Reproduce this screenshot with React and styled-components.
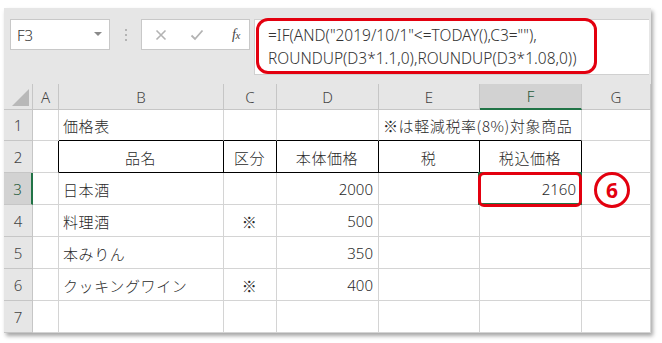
import React from "react";
import styled, { createGlobalStyle } from "styled-components";

const Global = createGlobalStyle`
  html, body { margin: 0; padding: 0; background: #fff; }
  body { font-family: "Noto Sans CJK JP", "Noto Sans", sans-serif; }
  * { box-sizing: border-box; }
`;

const Page = styled.div`
  width: 662px;
  height: 343px;
  padding: 8px 0 0 4px;
  background: #fff;
`;

const Frame = styled.div`
  width: 647px;
  background: #fff;
  box-shadow: 2px 3px 4px rgba(0, 0, 0, 0.35);
`;

const FormulaArea = styled.div`
  background: #e6e6e6;
  height: 76px;
  padding: 11px 0 0 6px;
  display: flex;
  align-items: flex-start;
`;

const NameBox = styled.div`
  width: 100px;
  height: 31px;
  background: #fff;
  border: 1px solid #c8c8c8;
  display: flex;
  align-items: center;
  justify-content: space-between;
  padding: 0 7px 0 6px;
  font-family: "Noto Sans", "Liberation Sans", sans-serif;
  font-weight: 300;
  font-size: 15px;
  color: #333;
`;

const Caret = styled.span`
  width: 0;
  height: 0;
  border-left: 4px solid transparent;
  border-right: 4px solid transparent;
  border-top: 4px solid #8a8a8a;
  margin-top: -2px;
`;

const Separator = styled.div`
  width: 31px;
  height: 31px;
  display: flex;
  flex-direction: column;
  align-items: center;
  justify-content: center;
  gap: 3px;
  & > span {
    width: 2px;
    height: 2px;
    background: #b4b4b4;
  }
`;

const ButtonBox = styled.div`
  width: 109px;
  height: 31px;
  background: #fff;
  border: 1px solid #c8c8c8;
  display: flex;
  align-items: center;
  padding-left: 13px;
`;

const IconSlot = styled.span`
  width: ${(p) => p.$w}px;
  display: flex;
  align-items: center;
  justify-content: center;
`;

const Fx = styled.span`
  font-family: "Liberation Serif", serif;
  font-style: italic;
  font-size: 14px;
  color: #444;
  letter-spacing: -0.5px;
  & small { font-size: 11px; }
`;

const FormulaBox = styled.div`
  position: relative;
  margin-left: 4px;
  width: 395px;
  height: 56px;
  background: #fff;
  border: 1px solid #d0d0d0;
  border-right: none;
  padding: 4px 0 0 13px;
  font-family: "Noto Sans", "Liberation Sans", sans-serif;
  font-weight: 300;
  font-size: 15.5px;
  line-height: 23px;
  color: #333;
  white-space: pre;
`;

const RedFrame = styled.div`
  position: absolute;
  border: 3px solid #e3000f;
  border-radius: ${(p) => p.$r}px;
  pointer-events: none;
`;

const Sheet = styled.div`
  position: relative;
  display: grid;
  grid-template-columns: 29px 26px 165px 53px 102px 101px 102px 69px;
  grid-template-rows: 26px 31px repeat(6, 32px);
  font-size: 15px;
  color: #222;
`;

const ColHead = styled.div`
  background: ${(p) => (p.$sel ? "#d2d2d2" : "#e6e6e6")};
  border-right: 1px solid #c6c6c6;
  border-bottom: ${(p) => (p.$sel ? "2px solid #217346" : "1px solid #c6c6c6")};
  color: ${(p) => (p.$sel ? "#1f5a3a" : "#444")};
  display: flex;
  align-items: center;
  justify-content: center;
  font-family: "Noto Sans", "Liberation Sans", sans-serif;
  font-weight: 300;
  font-size: 15px;
`;

const Corner = styled.div`
  background: #e6e6e6;
  border-right: 1px solid #c6c6c6;
  border-bottom: 1px solid #c6c6c6;
  position: relative;
  &::after {
    content: "";
    position: absolute;
    right: 3px;
    bottom: 3px;
    width: 0;
    height: 0;
    border-left: 17px solid transparent;
    border-bottom: 17px solid #b8b8b8;
  }
`;

const RowHead = styled.div`
  background: ${(p) => (p.$sel ? "#d2d2d2" : "#e6e6e6")};
  border-bottom: 1px solid #c6c6c6;
  border-right: ${(p) => (p.$sel ? "2px solid #217346" : "1px solid #c6c6c6")};
  color: ${(p) => (p.$sel ? "#1f5a3a" : "#444")};
  display: flex;
  align-items: center;
  justify-content: center;
  font-family: "Noto Sans", "Liberation Sans", sans-serif;
  font-weight: 300;
  font-size: 15px;
`;

const Cell = styled.div`
  position: relative;
  grid-column: ${(p) => (p.$span ? `span ${p.$span}` : "auto")};
  border-right: 1px solid ${(p) => (p.$rb ? "#000" : "#d4d4d4")};
  border-bottom: 1px solid ${(p) => (p.$bb ? "#000" : "#d4d4d4")};
  display: flex;
  align-items: center;
  padding: 1px 5px 0 4px;
  justify-content: ${(p) =>
    p.$align === "right" ? "flex-end" : p.$align === "center" ? "center" : "flex-start"};
  font-family: ${(p) =>
    p.$num ? `"Noto Sans", "Liberation Sans", sans-serif` : `"Noto Sans CJK JP", sans-serif`};
  font-weight: 300;
  letter-spacing: ${(p) => (p.$num ? "0" : "0.6px")};
  white-space: nowrap;
  color: #2a2a2a;
`;

const Selected = styled.div`
  position: absolute;
  inset: -1px -1px -1px -2px;
  border: 2px solid #217346;
  pointer-events: none;
`;

const Badge = styled.div`
  position: absolute;
  left: 590px;
  top: 88px;
  width: 36px;
  height: 36px;
  border: 3px solid #e3000f;
  border-radius: 50%;
  background: #fff;
  color: #e3000f;
  display: flex;
  align-items: center;
  justify-content: center;
  font-family: "Noto Sans", "Liberation Sans", sans-serif;
  font-weight: 700;
  font-size: 21px;
`;

const cols = ["A", "B", "C", "D", "E", "F", "G"];

const rows = [
  { n: 1, cells: [{}, { t: "価格表", bb: true }, { bb: true }, { bb: true }, { t: "※は軽減税率(8%)対象商品", bb: true, span: 2 }, {}] },
  {
    n: 2,
    cells: [
      { rb: true },
      { t: "品名", align: "center", rb: true, bb: true },
      { t: "区分", align: "center", rb: true, bb: true },
      { t: "本体価格", align: "center", rb: true, bb: true },
      { t: "税", align: "center", rb: true, bb: true },
      { t: "税込価格", align: "center", rb: true, bb: true },
      {},
    ],
  },
  { n: 3, sel: true, cells: [{}, { t: "日本酒" }, {}, { t: "2000", align: "right", num: true }, {}, { t: "2160", align: "right", num: true, active: true }, {}] },
  { n: 4, cells: [{}, { t: "料理酒" }, { t: "※", align: "center" }, { t: "500", align: "right", num: true }, {}, {}, {}] },
  { n: 5, cells: [{}, { t: "本みりん" }, {}, { t: "350", align: "right", num: true }, {}, {}, {}] },
  { n: 6, cells: [{}, { t: "クッキングワイン" }, { t: "※", align: "center" }, { t: "400", align: "right", num: true }, {}, {}, {}] },
  { n: 7, cells: [{}, {}, {}, {}, {}, {}, {}] },
];

export default function App() {
  return (
    <Page>
      <Global />
      <Frame>
        <FormulaArea>
          <NameBox>
            <span>F3</span>
            <Caret />
          </NameBox>
          <Separator>
            <span />
            <span />
            <span />
          </Separator>
          <ButtonBox>
            <IconSlot $w={12}>
              <svg width="12" height="12" viewBox="0 0 12 12">
                <path d="M1.5 1.5 L10.5 10.5 M10.5 1.5 L1.5 10.5" stroke="#b3b3b3" strokeWidth="1.6" />
              </svg>
            </IconSlot>
            <IconSlot $w={60}>
              <svg width="14" height="12" viewBox="0 0 14 12">
                <path d="M1.5 6.5 L5 10 L12.5 1.5" stroke="#b3b3b3" strokeWidth="1.8" fill="none" />
              </svg>
            </IconSlot>
            <IconSlot $w={18}>
              <Fx>
                f<small>x</small>
              </Fx>
            </IconSlot>
          </ButtonBox>
          <FormulaBox>
            {'=IF(AND("2019/10/1"<=TODAY(),C3=""),\nROUNDUP(D3*1.1,0),ROUNDUP(D3*1.08,0))'}
            <RedFrame $r={12} style={{ left: 1, top: -2, width: 341, height: 56 }} />
          </FormulaBox>
        </FormulaArea>
        <Sheet>
          <Corner />
          {cols.map((c) => (
            <ColHead key={c} $sel={c === "F"}>
              {c}
            </ColHead>
          ))}
          {rows.map((r) => (
            <React.Fragment key={r.n}>
              <RowHead $sel={r.sel}>{r.n}</RowHead>
              {r.cells.map((c, i) => (
                <Cell
                  key={i}
                  $align={c.align}
                  $num={c.num}
                  $rb={c.rb}
                  $bb={c.bb}
                  $span={c.span}
                >
                  {c.t}
                  {c.active && (
                    <>
                      <Selected />
                      <RedFrame $r={6} style={{ left: -2, top: -1, width: 104, height: 35 }} />
                    </>
                  )}
                </Cell>
              ))}
            </React.Fragment>
          ))}
          <Badge>6</Badge>
        </Sheet>
      </Frame>
    </Page>
  );
}
